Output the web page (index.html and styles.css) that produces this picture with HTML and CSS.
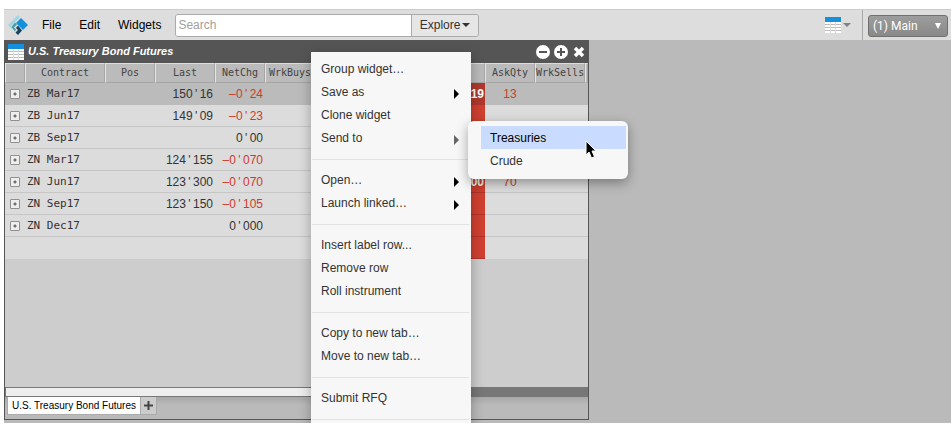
FILE: index.html
```html
<!DOCTYPE html>
<html lang="en">
<head>
<meta charset="utf-8">
<title>Main</title>
<link rel="stylesheet" href="styles.css">
</head>
<body>
<div class="app">
  <header class="toolbar">
    <svg class="logo" viewBox="0 0 20 20" aria-hidden="true">
      <path d="M10 0 12 2 3 11 5 13 4 14 0 10z" fill="#9fd6e4"/>
      <path d="M13 3 20 10 15 15 8 8z" fill="#1490dc"/>
      <path d="M7 7.500 9 9.500 6 12.500 8 14.500 7 16.500 3.500 12z" fill="#4b9ba8"/>
      <path d="M10 10.500 14 15.500 10 20 7.500 17.500 10 15 8 13z" fill="#10475e"/>
    </svg>
    <nav class="menubar">
      <button type="button">File</button>
      <button type="button">Edit</button>
      <button type="button">Widgets</button>
    </nav>
    <div class="search">
      <input type="text" placeholder="Search" aria-label="Search">
      <button type="button">Explore<i class="caret"></i></button>
    </div>
    <button type="button" class="layouts" aria-label="Layouts">
      <svg class="grid-icon" viewBox="0 0 16 16" aria-hidden="true">
        <path d="M0 0h16v16H0z" fill="#fff"/><path d="M0 0h16v5H0z" fill="#1490dc"/>
        <path d="M0 7.500h16M0 10.500h16M0 13.500h16" stroke="#bbb"/><path d="M5.500 5v11M10.500 5v11" stroke="#ddd"/>
      </svg>
      <i class="caret caret-gray"></i>
    </button>
    <div class="workspace-picker">
      <select aria-label="Workspace"><option>(1) Main</option></select>
      <i class="caret caret-white"></i>
    </div>
  </header>

  <main class="workspace">
    <section class="widget">
      <div class="titlebar">
        <svg class="grid-icon" viewBox="0 0 16 16" aria-hidden="true">
          <path d="M0 0h16v16H0z" fill="#fff"/><path d="M0 0h16v5H0z" fill="#1490dc"/>
          <path d="M0 7.500h16M0 10.500h16M0 13.500h16" stroke="#bbb"/><path d="M5.500 5v11M10.500 5v11" stroke="#ddd"/>
        </svg>
        <h1>U.S. Treasury Bond Futures</h1>
        <button type="button" aria-label="Minimize"><svg viewBox="0 0 14 14"><circle cx="7" cy="7" r="7" fill="#fff"/><path d="M3 7h8" stroke="#555" stroke-width="2"/></svg></button>
        <button type="button" aria-label="Add"><svg viewBox="0 0 14 14"><circle cx="7" cy="7" r="7" fill="#fff"/><path d="M3 7h8M7 3v8" stroke="#555" stroke-width="2"/></svg></button>
        <button type="button" aria-label="Close"><svg viewBox="0 0 14 14"><path d="M3 3l8 8M11 3l-8 8" stroke="#fff" stroke-width="3.500"/></svg></button>
      </div>
      <div class="grid">
        <table>
          <colgroup><col class="c20"><col class="c80"><col class="c50"><col class="c60"><col class="c50"><col class="c50"><col class="c50"><col class="c60"><col class="c60"><col class="c50"><col class="c50"><col></colgroup>
          <thead><tr><th></th><th>Contract</th><th>Pos</th><th>Last</th><th>NetChg</th><th>WrkBuys</th><th></th><th></th><th></th><th>AskQty</th><th>WrkSells</th><th></th></tr></thead>
          <tbody>
            <tr class="selected"><td><button type="button" class="expand" aria-label="Expand"></button></td><td class="name">ZB Mar17</td><td></td><td class="num">150<b>'</b>16</td><td class="num down"><b>–</b>0<b>'</b>24</td><td></td><td></td><td></td><td class="ask">19</td><td class="qty">13</td><td></td><td></td></tr>
            <tr><td><button type="button" class="expand" aria-label="Expand"></button></td><td class="name">ZB Jun17</td><td></td><td class="num">149<b>'</b>09</td><td class="num down"><b>–</b>0<b>'</b>23</td><td></td><td></td><td></td><td class="ask"></td><td></td><td></td><td></td></tr>
            <tr><td><button type="button" class="expand" aria-label="Expand"></button></td><td class="name">ZB Sep17</td><td></td><td></td><td class="num">0<b>'</b>00</td><td></td><td></td><td></td><td class="ask"></td><td></td><td></td><td></td></tr>
            <tr><td><button type="button" class="expand" aria-label="Expand"></button></td><td class="name">ZN Mar17</td><td></td><td class="num">124<b>'</b>155</td><td class="num down"><b>–</b>0<b>'</b>070</td><td></td><td></td><td></td><td class="ask"></td><td></td><td></td><td></td></tr>
            <tr><td><button type="button" class="expand" aria-label="Expand"></button></td><td class="name">ZN Jun17</td><td></td><td class="num">123<b>'</b>300</td><td class="num down"><b>–</b>0<b>'</b>070</td><td></td><td></td><td></td><td class="ask">00</td><td class="qty">70</td><td></td><td></td></tr>
            <tr><td><button type="button" class="expand" aria-label="Expand"></button></td><td class="name">ZN Sep17</td><td></td><td class="num">123<b>'</b>150</td><td class="num down"><b>–</b>0<b>'</b>105</td><td></td><td></td><td></td><td class="ask"></td><td></td><td></td><td></td></tr>
            <tr><td><button type="button" class="expand" aria-label="Expand"></button></td><td class="name">ZN Dec17</td><td></td><td></td><td class="num">0<b>'</b>000</td><td></td><td></td><td></td><td class="ask"></td><td></td><td></td><td></td></tr>
            <tr class="last"><td></td><td></td><td></td><td></td><td></td><td></td><td></td><td></td><td class="ask"></td><td></td><td></td><td></td></tr>
          </tbody>
        </table>
      </div>
      <div class="scrollbar"><div class="thumb"></div></div>
      <div class="tabs">
        <button type="button" class="tab">U.S. Treasury Bond Futures</button>
        <button type="button" class="tab add" aria-label="Add tab"><svg viewBox="0 0 9 9"><path d="M0 4.500h9M4.500 0v9" stroke="#444" stroke-width="2"/></svg></button>
      </div>
    </section>

    <div class="menu context">
      <button type="button">Group widget…</button>
      <button type="button" class="parent">Save as</button>
      <button type="button">Clone widget</button>
      <div class="sub">
        <button type="button" class="parent open">Send to</button>
        <div class="menu submenu">
          <button type="button" class="active">Treasuries</button>
          <button type="button">Crude</button>
          <svg class="cursor" viewBox="0 0 12 19" aria-hidden="true"><path d="M1 1v14l3-3 2.500 6 3-1.200-2.500-5.800H11z" fill="#000" stroke="#fff"/></svg>
        </div>
      </div>
      <hr>
      <button type="button" class="parent">Open…</button>
      <button type="button" class="parent">Launch linked…</button>
      <hr>
      <button type="button">Insert label row...</button>
      <button type="button">Remove row</button>
      <button type="button">Roll instrument</button>
      <hr>
      <button type="button">Copy to new tab…</button>
      <button type="button">Move to new tab…</button>
      <hr>
      <button type="button">Submit RFQ</button>
      <hr>
    </div>
  </main>
</div>
</body>
</html>
```
FILE: styles.css
```css
* { box-sizing: border-box; }
body {
  margin: 0;
  background: #fff;
  font: 12px/16px "Liberation Sans", Arial, sans-serif;
  color: #333;
}
button, input, select { font: inherit; color: inherit; margin: 0; padding: 0; border: 0; background: none; }
svg { display: block; }

.app {
  display: flex;
  flex-direction: column;
  height: calc(100vh - 10px);
  padding: 9px 0 0 4px;
}

.toolbar {
  display: flex;
  align-items: center;
  height: 31px;
  flex: none;
  background: #ddd;
  border-top: 1px solid #ccc;
}
.logo { width: 20px; height: 20px; margin-left: 4px; }
.menubar { display: flex; gap: 18px; margin: 0 14px; color: #000; }
.search {
  display: flex;
  width: 304px;
  height: 23px;
  border: 1px solid #aaa;
  border-radius: 3px;
  overflow: hidden;
}
.search input { flex: 1; min-width: 0; padding: 0 2px; background: #fff; }
.search input::placeholder { color: #a0a0a0; opacity: 1; }
.search button {
  display: flex;
  align-items: center;
  gap: 2px;
  padding: 0 8px;
  background: #e6e6e6;
  border-left: 1px solid #aaa;
}
.caret {
  width: 0;
  border: 4px solid transparent;
  border-top-color: #333;
  border-bottom: 0;
}
.caret-gray { border-top-color: #808080; }
.layouts { display: flex; align-items: center; gap: 2px; margin-left: auto; }
.grid-icon { width: 16px; height: 16px; }
.workspace-picker {
  display: flex;
  align-items: center;
  position: relative;
  height: 100%;
  margin-left: 11px;
  padding: 2px 3px 0 5px;
  border-left: 1px solid #aaa;
}
.workspace-picker select {
  appearance: none;
  width: 80px;
  height: 22px;
  padding: 0 4px;
  color: #fff;
  background: linear-gradient(#9d9d9d, #898989);
  border: 1px solid #707070;
  border-radius: 3px;
  font-family: Roboto, sans-serif;
}
.caret-white {
  position: absolute;
  right: 10px;
  border-width: 6px 3px 0;
  border-top-color: #fff;
  pointer-events: none;
}

.workspace {
  position: relative;
  flex: 1;
  min-height: 0;
  padding-bottom: 3px;
  background: #bababa;
  overflow: hidden;
}

.widget {
  display: flex;
  flex-direction: column;
  width: 585px;
  height: 100%;
  border: 1px solid #555;
  border-top: 0;
}
.titlebar {
  display: flex;
  align-items: center;
  gap: 4px;
  height: 23px;
  padding: 0 2px 0 3px;
  background: #555;
}
.titlebar h1 {
  flex: 1;
  margin: 0;
  color: #fff;
  font-size: 11px;
  line-height: 16px;
  padding-bottom: 2px;
  font-style: italic;
}
.titlebar button svg { width: 14px; height: 14px; }

.grid { flex: 1; min-height: 0; background: #cdcdcd; }
table { width: 100%; table-layout: fixed; border-collapse: separate; border-spacing: 0; }
.c20 { width: 20px; }
.c50 { width: 50px; }
.c60 { width: 60px; }
.c80 { width: 80px; }
th, td { padding: 0; white-space: nowrap; }
th {
  height: 20px;
  color: #444;
  background: #bbb;
  border: 1px solid #a5a5a5;
  border-top-color: #ddd;
  border-left-color: #e5e5e5;
  font: 10px/18px "DejaVu Sans Mono", monospace;
}
td { height: 22px; padding-top: 1px; background: #dcdcdc; border-bottom: 1px solid #c6c6c6; line-height: 20px; }
.selected td { background: #bbb; border-color: #bbb; }
.last td { border-color: #dcdcdc; }
.name { padding-left: 2px; font: 11px/20px "DejaVu Sans Mono", monospace; }
.num { padding-right: 2px; text-align: right; }
.num b { display: inline-block; width: 7px; font-weight: normal; text-align: center; }
.down, .qty { color: #d03a2e; }
.qty { text-align: center; }
td.ask { padding-right: 1px; color: #fff; background: #d04030; border-color: #b03428; font-weight: bold; text-align: right; }
.selected td.ask { background: #b0382c; border-color: #b0382c; }
.expand {
  display: block;
  width: 10px;
  height: 10px;
  margin-left: 5px;
  border: 1px solid #909090;
  border-radius: 1px;
  background: radial-gradient(circle, #707070 1px, #eee 2px);
}

.scrollbar { height: 10px; background: #777; }
.thumb { width: 75%; height: 100%; background: #eee; border: 1px solid #777; }
.tabs {
  display: flex;
  height: 22px;
  padding: 0 2px 4px;
  background: linear-gradient(#a8a8a8, #bababa 8px);
}
.tab {
  padding: 0 4px;
  color: #000;
  background: #fff;
  border: 1px solid #aaa;
  border-top: 0;
  font-size: 10px;
}
.tab.add { width: 16px; padding: 0 3px; background: #ccc; border-left: 0; }
.tab.add svg { width: 9px; height: 9px; }

.menu { position: absolute; width: 160px; background: #f7f7f7; }
.context { top: 12px; left: 307px; padding: 5px 0; box-shadow: 0 4px 12px rgba(0, 0, 0, .3); }
.menu button { display: flex; align-items: center; width: 100%; height: 23px; padding: 0 10px; color: #333; }
.menu hr { height: 1px; margin: 10px 2px 8px 1px; border: 0; background: #e2e2e2; }
.menu .parent::after {
  content: "";
  margin: 4px 2px 0 auto;
  border: 5px solid transparent;
  border-left-color: #000;
  border-right: 0;
}
.menu .open::after { border-left-color: #666; }
.sub { position: relative; }
.submenu {
  top: -5px;
  left: 157px;
  padding: 5px 2px 7px 13px;
  border-radius: 6px;
  box-shadow: 0 4px 12px rgba(0, 0, 0, .35);
}
.submenu button { padding: 0 9px; }
.submenu .active { color: #000; background: #c9dcff; }
.cursor { position: absolute; top: 19px; left: 117px; width: 12px; height: 19px; }
```
